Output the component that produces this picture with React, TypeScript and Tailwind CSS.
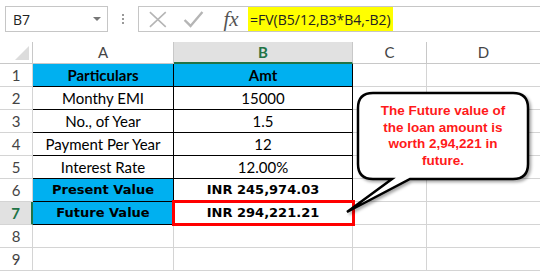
import React from "react";

const rows = [
  { n: 1, a: "Particulars", b: "Amt", kind: "head" },
  { n: 2, a: "Monthy EMI", b: "15000", kind: "plain" },
  { n: 3, a: "No., of Year", b: "1.5", kind: "plain" },
  { n: 4, a: "Payment Per Year", b: "12", kind: "plain" },
  { n: 5, a: "Interest Rate", b: "12.00%", kind: "plain" },
  { n: 6, a: "Present Value", b: "INR 245,974.03", kind: "strong" },
  { n: 7, a: "Future Value", b: "INR 294,221.21", kind: "strong" },
];

const cellFont = { fontFamily: "Lato, 'Open Sans', sans-serif" };
const strongFont = { fontFamily: "'DejaVu Sans', Verdana, sans-serif" };

function FormulaBar() {
  return (
    <div className="flex h-[42px] items-start pt-[6px]">
      <div className="ml-[5px] flex h-[26px] w-[103px] items-center justify-between border border-[#c6c6c6] pl-[7px] pr-[6px] text-[14px] text-[#222]" style={{ fontFamily: "'Open Sans', sans-serif" }}>
        <span>B7</span>
        <span className="h-0 w-0 border-x-[4px] border-t-[4px] border-x-transparent border-t-[#777]" />
      </div>
      <div className="flex h-[26px] w-[30px] flex-col items-center justify-center gap-[2px]">
        <span className="h-[2px] w-[2px] bg-[#999]" />
        <span className="h-[2px] w-[2px] bg-[#999]" />
        <span className="h-[2px] w-[2px] bg-[#999]" />
      </div>
      <div className="flex h-[26px] w-[111px] items-center border border-[#c6c6c6]">
        <svg width="110" height="24" viewBox="0 0 110 24">
          <path d="M11 5 L27 20 M27 5 L11 20" stroke="#b5b5b5" strokeWidth="1.6" fill="none" />
          <path d="M46 13 L52 19 L64 5" stroke="#b5b5b5" strokeWidth="2.4" fill="none" />
        </svg>
      </div>
      <div className="-ml-[32px] flex h-[26px] w-[28px] items-center justify-center text-[21px] italic leading-none text-[#555]" style={{ fontFamily: "'Liberation Serif', serif" }}>
        fx
      </div>
      <div className="ml-[3px] flex h-[26px] flex-1 items-stretch border-y border-[#c6c6c6]">
        <div className="flex w-[145px] items-center bg-[#ffff00] pl-[2px] text-[14px] text-[#222]" style={{ fontFamily: "'Open Sans', sans-serif" }}>
          =FV(B5/12,B3*B4,-B2)
        </div>
      </div>
    </div>
  );
}

function Callout() {
  return (
    <div className="pointer-events-none absolute left-0 top-0 h-[272px] w-[540px]">
      <svg width="540" height="272" className="absolute left-0 top-0">
        <defs>
          <filter id="sh" x="-10%" y="-10%" width="130%" height="130%">
            <feDropShadow dx="2" dy="2" stdDeviation="1.5" floodColor="#000" floodOpacity="0.35" />
          </filter>
        </defs>
        <path
          d="M373 93 H513 Q528 93 528 108 V164 Q528 179 513 179 H410 L347 212 L392 179 H373 Q358 179 358 164 V108 Q358 93 373 93 Z"
          fill="#fff"
          stroke="#000"
          strokeWidth="2.5"
          filter="url(#sh)"
        />
      </svg>
      <div
        className="absolute left-[358px] top-[93px] flex h-[86px] w-[170px] items-center justify-center text-center text-[13.5px] font-bold leading-[16.5px] text-[#ff1a1a]"
        style={{ fontFamily: "'Liberation Sans', Arial, sans-serif" }}
      >
        The Future value of
        <br />
        the loan amount is
        <br />
        worth 2,94,221 in
        <br />
        future.
      </div>
    </div>
  );
}

export default function App() {
  return (
    <div className="relative h-[272px] w-[540px] overflow-hidden bg-white">
      <FormulaBar />
      <div className="grid grid-cols-[33px_141px_179px_74px_1fr] grid-rows-[22px_repeat(9,23px)]">
        <div className="relative border-b border-r border-[#c8c8c8] bg-white">
          <span className="absolute bottom-[3px] right-[3px] h-0 w-0 border-b-[14px] border-l-[14px] border-b-[#dcdcdc] border-l-transparent" />
        </div>
        <div className="flex items-center justify-center border-b border-r border-[#c8c8c8] text-[15px] text-[#444]" style={cellFont}>A</div>
        <div className="flex items-center justify-center border-b-2 border-r border-b-[#217346] border-r-[#c8c8c8] bg-[#e1e1e1] text-[15px] font-bold text-[#217346]" style={cellFont}>B</div>
        <div className="flex items-center justify-center border-b border-r border-[#c8c8c8] text-[15px] text-[#444]" style={cellFont}>C</div>
        <div className="flex items-center justify-center border-b border-[#c8c8c8] text-[15px] text-[#444]" style={cellFont}>D</div>

        {rows.map((r) => {
          const active = r.n === 7;
          const blue = r.kind !== "plain";
          const bold = r.kind === "head";
          const strong = r.kind === "strong";
          return (
            <React.Fragment key={r.n}>
              <div
                className={
                  active
                    ? "flex items-center justify-center border-b border-r-2 border-b-[#d4d4d4] border-r-[#217346] bg-[#e1e1e1] text-[15px] font-bold text-[#217346]"
                    : "flex items-center justify-center border-b border-r border-[#d4d4d4] text-[15px] text-[#444]"
                }
                style={cellFont}
              >
                {r.n}
              </div>
              <div
                className={`flex items-center justify-center border-b border-r border-black text-black ${blue ? "bg-[#00b0f0]" : ""} ${bold ? "text-[15px] font-bold" : strong ? "text-[13px] font-bold" : "text-[15px]"}`}
                style={strong ? strongFont : cellFont}
              >
                {r.a}
              </div>
              <div
                className={`relative flex items-center justify-center border-b border-r border-black text-black ${bold ? "bg-[#00b0f0] text-[15px] font-bold" : strong ? "text-[13px] font-bold" : "text-[15px]"}`}
                style={strong ? strongFont : cellFont}
              >
                {r.b}
                {active && (
                  <span className="absolute -left-[2px] -top-[2px] h-[26px] w-[183px] border-[3px] border-[#ff0000]" />
                )}
              </div>
              <div className="border-b border-r border-[#d4d4d4]" />
              <div className="border-b border-[#d4d4d4]" />
            </React.Fragment>
          );
        })}

        {[8, 9].map((n) => (
          <React.Fragment key={n}>
            <div className="flex items-center justify-center border-b border-r border-[#d4d4d4] text-[15px] text-[#444]" style={cellFont}>
              {n}
            </div>
            <div className="border-b border-r border-[#d4d4d4]" />
            <div className="border-b border-r border-[#d4d4d4]" />
            <div className="border-b border-r border-[#d4d4d4]" />
            <div className="border-b border-[#d4d4d4]" />
          </React.Fragment>
        ))}
      </div>
      <Callout />
    </div>
  );
}
